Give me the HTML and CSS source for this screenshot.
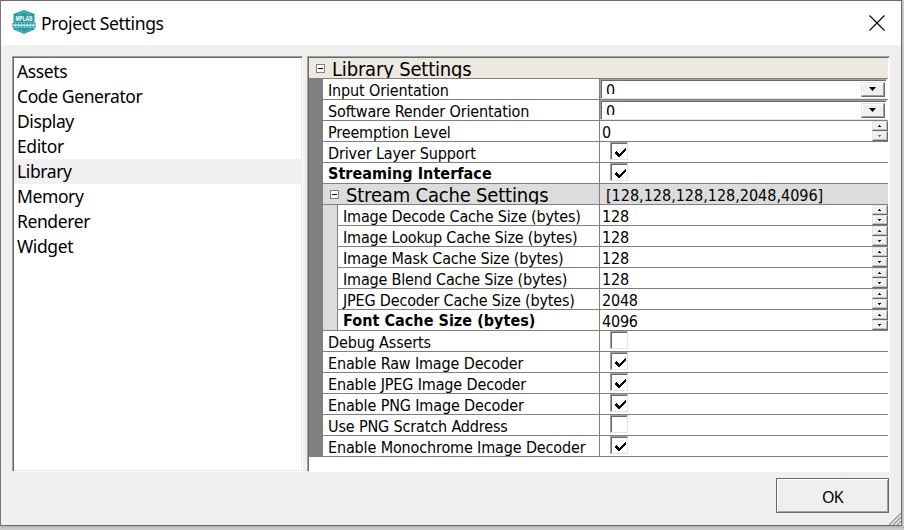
FILE: index.html
```html
<!DOCTYPE html>
<html lang="en">
<head>
<meta charset="utf-8">
<title>Project Settings</title>
<link rel="stylesheet" href="styles.css">
</head>
<body>
<svg class="defs" width="0" height="0">
  <symbol id="tick" viewBox="0 0 12 10"><path d="M0 4h1v-1h1v1h1v1h1v1h1v-1h1v-1h1v-1h1v-1h1v-1h1v-1h1v3h-1v1h-1v1h-1v1h-1v1h-1v1h-1v1h-2v-1h-1v-1h-1v-1h-1z"/></symbol>
</svg>
<div class="window">
  <header class="titlebar">
    <svg class="logo" width="24" height="26" viewBox="0 0 24 26">
      <path d="M12 1L22.500 5V20.500L12 25 1.500 20.500V5Z" fill="#2699a5"/>
      <path d="M5 6L12 3l7 3M4 20l8 3.500 8-3.500" fill="none" stroke="#57bdc4"/>
      <path d="M0 13.500H24V19H0Z" fill="#85cbd0"/>
      <path d="M1 14.500H23M1 18H23" stroke="#258f9b" stroke-dasharray="2 1"/>
      <path d="M2 16.300H22" stroke="#e5f5f6" stroke-dasharray="2 1"/>
      <text x="3.500" y="12" textLength="17" lengthAdjust="spacingAndGlyphs" class="logo-text">MPLAB</text>
    </svg>
    <h1 class="title">Project Settings</h1>
    <svg class="close" width="16" height="16" viewBox="0 0 16 16"><path d="M.5.5l15 15M15.500.5l-15 15" stroke="#000" stroke-width="1.100"/></svg>
  </header>
  <main class="panes">
    <ul class="pages">
      <li>Assets</li><li>Code Generator</li><li>Display</li><li>Editor</li>
      <li class="selected">Library</li><li>Memory</li><li>Renderer</li><li>Widget</li>
    </ul>
    <section class="props">
      <div class="category"><span class="fold"></span><span class="heading">Library Settings</span></div>
      <div class="group">
        <div class="row"><span class="name">Input Orientation</span><span class="value"><span class="combo"><span class="combo-text">0</span><span class="drop"></span></span></span></div>
        <div class="row"><span class="name">Software Render Orientation</span><span class="value"><span class="combo"><span class="combo-text">0</span><span class="drop"></span></span></span></div>
        <div class="row"><span class="name">Preemption Level</span><span class="value">0<span class="spin"><i class="up"></i><i class="down off"></i></span></span></div>
        <div class="row"><span class="name">Driver Layer Support</span><span class="value"><span class="check"><svg><use href="#tick"/></svg></span></span></div>
        <div class="row"><span class="name strong">Streaming Interface</span><span class="value"><span class="check"><svg><use href="#tick"/></svg></span></span></div>
        <div class="row sub"><span class="name"><span class="fold"></span><span class="heading">Stream Cache Settings</span></span><span class="value">[128,128,128,128,2048,4096]</span></div>
        <div class="subgroup">
          <div class="row"><span class="name">Image Decode Cache Size (bytes)</span><span class="value">128<span class="spin"><i class="up"></i><i class="down"></i></span></span></div>
          <div class="row"><span class="name">Image Lookup Cache Size (bytes)</span><span class="value">128<span class="spin"><i class="up"></i><i class="down"></i></span></span></div>
          <div class="row"><span class="name">Image Mask Cache Size (bytes)</span><span class="value">128<span class="spin"><i class="up"></i><i class="down"></i></span></span></div>
          <div class="row"><span class="name">Image Blend Cache Size (bytes)</span><span class="value">128<span class="spin"><i class="up"></i><i class="down"></i></span></span></div>
          <div class="row"><span class="name">JPEG Decoder Cache Size (bytes)</span><span class="value">2048<span class="spin"><i class="up"></i><i class="down"></i></span></span></div>
          <div class="row"><span class="name strong">Font Cache Size (bytes)</span><span class="value">4096<span class="spin"><i class="up"></i><i class="down"></i></span></span></div>
        </div>
        <div class="row"><span class="name">Debug Asserts</span><span class="value"><span class="check"></span></span></div>
        <div class="row"><span class="name">Enable Raw Image Decoder</span><span class="value"><span class="check"><svg><use href="#tick"/></svg></span></span></div>
        <div class="row"><span class="name">Enable JPEG Image Decoder</span><span class="value"><span class="check"><svg><use href="#tick"/></svg></span></span></div>
        <div class="row"><span class="name">Enable PNG Image Decoder</span><span class="value"><span class="check"><svg><use href="#tick"/></svg></span></span></div>
        <div class="row"><span class="name">Use PNG Scratch Address</span><span class="value"><span class="check"></span></span></div>
        <div class="row"><span class="name">Enable Monochrome Image Decoder</span><span class="value"><span class="check"><svg><use href="#tick"/></svg></span></span></div>
      </div>
    </section>
  </main>
  <footer class="actions"><button class="ok">OK</button></footer>
  <svg class="grip" width="13" height="13"><path d="M0 13L13 0M4 13L13 4M8 13l5-5" stroke="#fff"/><path d="M1 13L13 1M5 13L13 5M9 13l4-4" stroke="#999" stroke-width="1.500"/></svg>
</div>
</body>
</html>
```
FILE: styles.css
```css
* { box-sizing: border-box; }
body {
  margin: 0;
  width: 904px;
  height: 530px;
  overflow: hidden;
  padding-left: 1px;
  background: linear-gradient(#b4b4b4, #d2d2d2 4px) 0 526px / 100% 4px no-repeat, linear-gradient(90deg, #777 1px, #bcbcbc 902px, #d2d2d2);
  color: #000;
}
.defs { position: absolute; }
.window {
  position: relative;
  width: 901px;
  height: 526px;
  border: solid #6b696b;
  border-width: 1px 1px 1px 0;
  background: #efefef;
}
.titlebar {
  display: flex;
  align-items: center;
  height: 44px;
  padding: 0 16px 0 11px;
  background: #fff;
}
.logo { margin-top: -3px; }
.logo-text { font: bold 6.500px "Liberation Sans", sans-serif; fill: #fff; }
.title {
  margin: 0 0 1px 5px;
  font: 17.6px/24px "Noto Sans", sans-serif;
  letter-spacing: -.4px;
}
.close { margin-left: auto; margin-top: -1px; }
.panes { display: flex; gap: 4px; padding: 11px 11px 0; }
.pages {
  width: 291px;
  height: 416px;
  margin: 0;
  padding: 1px 0 0;
  list-style: none;
  border: 1px solid;
  border-color: #a0a0a0 #fff #fff #a0a0a0;
  box-shadow: inset 1px 1px #696969, inset -1px -1px #e9e9e9;
  background: #fff;
  font: 17.5px/24px "Noto Sans", sans-serif;
  letter-spacing: -.4px;
}
.pages li { height: 25px; margin: 0 1px; padding-left: 3px; }
.pages li:first-child { margin-top: 1px; }
.pages .selected { background: #f0f0f0; }
.props {
  width: 583px;
  height: 416px;
  padding: 1px 1px 0 1px;
  border: 1px solid;
  border-color: #a0a0a0 #fff #fff #a0a0a0;
  box-shadow: inset 1px 1px #696969;
  background: #fff;
  font: 16px/20px "DejaVu Sans Condensed", "DejaVu Sans", sans-serif;
  font-stretch: condensed;
  white-space: nowrap;
}
.category {
  display: flex;
  height: 21px;
  border-bottom: 1px solid #808080;
  padding-left: 7px;
  background: #ede8e0;
}
.fold {
  flex: none;
  width: 9px;
  height: 9px;
  margin-top: 6px;
  border: 1px solid #808080;
  background: linear-gradient(#000, #000) 1px 3px / 5px 1px no-repeat #fff;
}
.heading {
  height: 20px;
  overflow: hidden;
  margin-left: 7px;
  font-size: 20px;
  line-height: 23px;
  letter-spacing: -.18px;
}
.group { border-left: 14px solid #808080; }
.row { display: flex; height: 21px; border-bottom: 1px solid #808080; }
.name { width: 277px; padding-left: 5px; border-right: 1px solid #808080; line-height: 24px; letter-spacing: -.14px; overflow: hidden; }
.value { position: relative; display: flex; flex: 1; padding-left: 2px; line-height: 24px; letter-spacing: -.2px; }
.sub { background: #dcdcdc; }
.sub .name { display: flex; padding-left: 7px; }
.sub .value { padding-left: 6px; letter-spacing: 0; }
.subgroup { border-left: 14px solid #dcdcdc; }
.subgroup .row { border-left: 1px solid #808080; }
.subgroup .row:last-child { margin-left: -14px; padding-left: 14px; border-left: 0; background: linear-gradient(#dcdcdc, #dcdcdc) 0 0 / 14px 100% no-repeat; }
.subgroup .row:last-child .name { width: 263px; border-left: 1px solid #808080; }
.subgroup .name { width: 262px; letter-spacing: -.18px; }
.row .strong { font-weight: bold; line-height: 22px; letter-spacing: .04px; }
.combo {
  display: flex;
  justify-content: space-between;
  width: 287px;
  height: 20px;
  margin-left: -2px;
  padding: 3px 1px 2px 5px;
  border: 1px solid;
  border-color: #a0a0a0 #fff #e3e3e3 #a0a0a0;
  box-shadow: inset 1px 1px #696969;
}
.combo-text { height: 11px; overflow: hidden; line-height: 15px; }
.drop {
  width: 24px;
  height: 15px;
  margin-top: -1px;
  border: 1px solid;
  border-color: #e3e3e3 #696969 #696969 #e3e3e3;
  box-shadow: inset -1px -1px #a0a0a0, inset 1px 1px #fff;
  background: #efefef;
}
.drop::before { content: ""; display: block; width: 7px; height: 4px; margin: 4px 0 0 7px; background: #000; clip-path: polygon(0 0, 100% 0, 50% 100%); }
.spin { width: 16px; height: 20px; margin-left: auto; }
.spin i {
  display: block;
  height: 10px;
  border: 1px solid;
  border-color: #e3e3e3 #696969 #696969 #e3e3e3;
  box-shadow: inset -1px -1px #c0c0c0, inset 1px 1px #fff;
  background: #efefef;
}
.spin i::before { content: ""; display: block; width: 3px; height: 2px; margin: 3px 0 0 5px; background: linear-gradient(#000, #000) 1px 0 / 1px 1px no-repeat, linear-gradient(#000, #000) 0 1px / 3px 1px no-repeat; }
.spin .down::before { transform: scaleY(-1); }
.spin .off::before { opacity: .5; }
.check {
  width: 18px;
  height: 18px;
  margin-left: 8px;
  padding: 5px 0 0 4px;
  border: 1px solid;
  border-color: #a0a0a0 #e3e3e3 #e3e3e3 #a0a0a0;
  box-shadow: inset 1px 1px #696969;
}
.check svg { display: block; width: 12px; height: 10px; }
.actions { display: flex; justify-content: flex-end; padding: 6px 12px 0; }
.ok {
  width: 113px;
  height: 35px;
  padding: 2px 0 0;
  border: 1px solid #696969;
  border-radius: 0;
  box-shadow: inset 1px 1px #fff, inset -1px -1px #a0a0a0;
  background: #efefef;
  color: #000;
  font: 16px "Noto Sans", sans-serif;
  letter-spacing: -.6px;
}
.grip { position: absolute; right: 0; bottom: 0; }
```
